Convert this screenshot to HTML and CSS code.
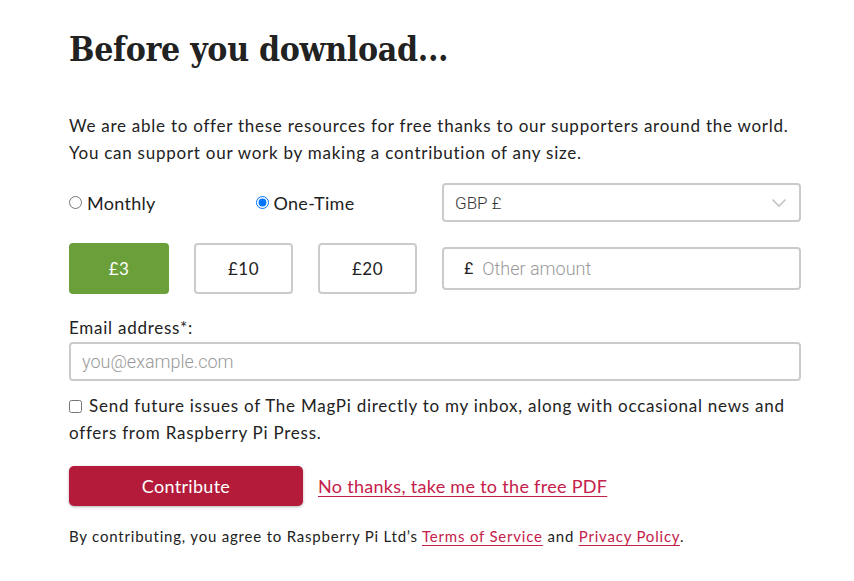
FILE: index.html
```html
<!DOCTYPE html>
<html lang="en">
<head>
<meta charset="utf-8">
<title>Before you download</title>
<link rel="stylesheet" href="styles.css">
</head>
<body>
<main class="page">
  <h1 class="title">Before you download...</h1>
  <p class="intro">We are able to offer these resources for free thanks to our supporters around the world. You can support our work by making a contribution of any size.</p>
  <form class="form">
    <div class="row">
      <div class="left radios">
        <label class="radio"><input type="radio" name="freq"> Monthly</label>
        <label class="radio"><input type="radio" name="freq" checked> One-Time</label>
      </div>
      <div class="right">
        <div class="select">
          <span>GBP £</span>
          <svg class="chev" width="16" height="10" viewBox="0 0 16 10"><path d="M1.5 1.5 L8 8 L14.5 1.5" fill="none" stroke="#c4c4c4" stroke-width="1.6"/></svg>
        </div>
      </div>
    </div>
    <div class="row amounts-row">
      <div class="left amounts">
        <button type="button" class="amt amt-active">£3</button>
        <button type="button" class="amt">£10</button>
        <button type="button" class="amt">£20</button>
      </div>
      <div class="right">
        <div class="other">
          <span class="pound">£</span>
          <span class="ph">Other amount</span>
        </div>
      </div>
    </div>
    <label class="email-label">Email address*:</label>
    <div class="email"><span class="ph">you@example.com</span></div>
    <label class="check"><input type="checkbox"> Send future issues of The MagPi directly to my inbox, along with occasional news and offers from Raspberry Pi Press.</label>
    <div class="actions">
      <button type="button" class="contribute">Contribute</button>
      <a class="link" href="#">No thanks, take me to the free PDF</a>
    </div>
    <p class="terms">By contributing, you agree to Raspberry Pi Ltd’s <a class="link" href="#">Terms of Service</a> and <a class="link" href="#">Privacy Policy</a>.</p>
  </form>
</main>
</body>
</html>
```
FILE: styles.css
```css
* { box-sizing: border-box; }
html, body { margin: 0; padding: 0; background: #fff; }
body {
  font-family: "Lato", "Open Sans", sans-serif;
  color: #222;
}
.page {
  width: 732px;
  margin-left: 69px;
  padding-top: 26px;
}
.title {
  font-family: "DejaVu Serif Condensed", "DejaVu Serif", serif;
  font-stretch: condensed;
  font-weight: bold;
  font-size: 33.5px;
  letter-spacing: -0.3px;
  line-height: 48px;
  margin: 0 0 38px 0;
  color: #222;
}
.intro {
  font-size: 17px;
  line-height: 27px;
  letter-spacing: 0.75px;
  margin: 0 0 17px 0;
  color: #222;
}
.form { display: flex; flex-direction: column; }
.row { display: flex; align-items: center; }
.left { width: 373px; flex: none; }
.right { flex: 1; }
.radios { display: flex; }
.radio {
  display: flex; align-items: center; gap: 5px;
  font-size: 18px; width: 187px; color: #222;
  letter-spacing: 0.3px;
}
.radio input { margin: 0; width: 13px; height: 13px; }
.select {
  height: 39px;
  border: 2px solid #cbcbcb;
  border-radius: 4px;
  display: flex; align-items: center; justify-content: space-between;
  padding: 0 12px 0 11px;
  font-family: "Roboto", sans-serif;
  font-weight: 300;
  font-size: 17px; color: #333;
}
.amounts-row { margin-top: 21px; }
.amounts { display: flex; gap: 25px; }
.amt {
  width: 99px; height: 51px;
  border: 2px solid #cbcbcb;
  border-radius: 4px;
  background: #fff;
  font-family: "Lato", sans-serif;
  font-size: 17px; font-weight: normal;
  letter-spacing: 0.5px;
  color: #222;
}
.amt-active { background: #6a9f3a; border-color: #6a9f3a; color: #fff; width: 100px; }
.other {
  height: 43px;
  border: 2px solid #cbcbcb;
  border-radius: 4px;
  display: flex; align-items: center; gap: 9px;
  padding: 0 20px;
  font-family: "Roboto", sans-serif;
  font-weight: 300;
  font-size: 18px;
}
.pound { color: #222; font-size: 16px; font-weight: 400; }
.ph { color: #9a9a9a; }
.email-label { margin-top: 22px; font-size: 17px; line-height: 24px; letter-spacing: 0.75px; }
.email {
  margin-top: 2px;
  height: 39px;
  border: 2px solid #cbcbcb;
  border-radius: 4px;
  display: flex; align-items: center;
  padding: 0 11px;
  font-family: "Roboto", sans-serif;
  font-weight: 300;
  font-size: 18px;
}
.check { margin-top: 11px; font-size: 17px; line-height: 27px; letter-spacing: 0.75px; }
.check input { margin: 0 2px 0 0; width: 13px; height: 13px; vertical-align: -1px; }
.actions { display: flex; align-items: center; gap: 15px; margin-top: 20px; }
.contribute {
  width: 234px; height: 40px;
  background: #b41b3a; color: #fff;
  border: none; border-radius: 5px;
  font-family: "Lato", sans-serif; font-size: 18px;
  letter-spacing: 0.3px;
  box-shadow: 0 1px 3px rgba(0,0,0,0.3);
}
.actions .link { font-size: 18px; letter-spacing: 0.3px; }
.link { color: #c4204a; text-decoration: underline; text-underline-offset: 3px; }
.terms { font-size: 15px; margin: 19px 0 0 0; line-height: 22px; color: #222; letter-spacing: 0.8px; }
```
